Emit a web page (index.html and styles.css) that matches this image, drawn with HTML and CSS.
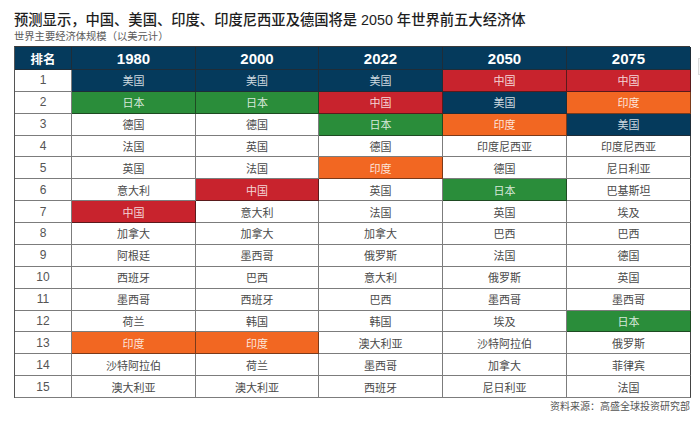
FILE: index.html
```html
<!DOCTYPE html>
<html lang="zh-CN">
<head>
<meta charset="utf-8">
<link rel="stylesheet" href="styles.css">
</head>
<body>
<div class="page">
  <h1 class="title">预测显示，中国、美国、印度、印度尼西亚及德国将是 2050 年世界前五大经济体</h1>
  <p class="subtitle">世界主要经济体规模（以美元计）</p>
  <div class="grid">
    <div class="h rank-h">排名</div><div class="h">1980</div><div class="h">2000</div><div class="h">2022</div><div class="h">2050</div><div class="h">2075</div>

    <div class="r">1</div><div class="c navy">美国</div><div class="c navy">美国</div><div class="c navy">美国</div><div class="c red">中国</div><div class="c red">中国</div>
    <div class="r">2</div><div class="c green">日本</div><div class="c green">日本</div><div class="c red">中国</div><div class="c navy">美国</div><div class="c orange">印度</div>
    <div class="r">3</div><div class="c">德国</div><div class="c">德国</div><div class="c green">日本</div><div class="c orange">印度</div><div class="c navy">美国</div>
    <div class="r">4</div><div class="c">法国</div><div class="c">英国</div><div class="c">德国</div><div class="c">印度尼西亚</div><div class="c">印度尼西亚</div>
    <div class="r">5</div><div class="c">英国</div><div class="c">法国</div><div class="c orange">印度</div><div class="c">德国</div><div class="c">尼日利亚</div>
    <div class="r">6</div><div class="c">意大利</div><div class="c red">中国</div><div class="c">英国</div><div class="c green">日本</div><div class="c">巴基斯坦</div>
    <div class="r">7</div><div class="c red">中国</div><div class="c">意大利</div><div class="c">法国</div><div class="c">英国</div><div class="c">埃及</div>
    <div class="r">8</div><div class="c">加拿大</div><div class="c">加拿大</div><div class="c">加拿大</div><div class="c">巴西</div><div class="c">巴西</div>
    <div class="r">9</div><div class="c">阿根廷</div><div class="c">墨西哥</div><div class="c">俄罗斯</div><div class="c">法国</div><div class="c">德国</div>
    <div class="r">10</div><div class="c">西班牙</div><div class="c">巴西</div><div class="c">意大利</div><div class="c">俄罗斯</div><div class="c">英国</div>
    <div class="r">11</div><div class="c">墨西哥</div><div class="c">西班牙</div><div class="c">巴西</div><div class="c">墨西哥</div><div class="c">墨西哥</div>
    <div class="r">12</div><div class="c">荷兰</div><div class="c">韩国</div><div class="c">韩国</div><div class="c">埃及</div><div class="c green">日本</div>
    <div class="r">13</div><div class="c orange">印度</div><div class="c orange">印度</div><div class="c">澳大利亚</div><div class="c">沙特阿拉伯</div><div class="c">俄罗斯</div>
    <div class="r">14</div><div class="c">沙特阿拉伯</div><div class="c">荷兰</div><div class="c">墨西哥</div><div class="c">加拿大</div><div class="c">菲律宾</div>
    <div class="r">15</div><div class="c">澳大利亚</div><div class="c">澳大利亚</div><div class="c">西班牙</div><div class="c">尼日利亚</div><div class="c">法国</div>
  </div>
  <p class="source">资料来源：高盛全球投资研究部</p>
  <div class="edge-tab"></div>
</div>
</body>
</html>
```
FILE: styles.css
```css
* { box-sizing: border-box; }
html, body { margin: 0; padding: 0; background: #fff; }
body {
  font-family: "Liberation Sans", "Noto Sans CJK SC", sans-serif;
  color: #444;
}
.page {
  position: relative;
  width: 700px;
  height: 431px;
  padding: 10px 0 0 14px;
  overflow: hidden;
}
.title {
  margin: 0;
  font-family: "Liberation Sans", "Noto Sans CJK SC", sans-serif;
  font-size: 14.3px;
  line-height: 20px;
  font-weight: 500;
  color: #1e1e1e;
}
.subtitle {
  margin: 0;
  font-family: "Noto Sans CJK SC", sans-serif;
  font-size: 10.3px;
  line-height: 12px;
  color: #5a5a5a;
}
.grid {
  margin-top: 4px;
  width: 676px;
  height: 352px;
  display: grid;
  grid-template-columns: 57px 124px 123px 124px 124px 124px;
  grid-template-rows: 23px repeat(15, 1fr);
  border-top: 1px solid #3a3a3a;
  border-left: 1px solid #555;
}
.grid > div {
  display: flex;
  align-items: center;
  justify-content: center;
  border-right: 1px solid #7c7c7c;
  border-bottom: 1px solid #7c7c7c;
}
.h {
  background: #053a5c;
  color: #fff;
  font-family: "Liberation Sans", sans-serif;
  font-weight: bold;
  font-size: 15px;
  border-color: #1f2d38 !important;
}
.rank-h {
  font-family: "Noto Sans CJK SC", sans-serif;
  font-size: 12.5px;
}
.r {
  font-family: "Liberation Sans", sans-serif;
  font-size: 12px;
  color: #555;
}
.c {
  font-family: "Noto Sans CJK SC", sans-serif;
  font-size: 11px;
  color: #4a4a4a;
}
.grid > div:nth-child(6n) { border-right-color: #444; }
.navy { background: #053a5c; color: rgba(255,255,255,0.82); border-color: #1f2d38 !important; }
.red { background: #c8232d; color: rgba(255,255,255,0.82); border-color: #5a1a1c !important; }
.green { background: #2a8d3a; color: rgba(255,255,255,0.82); border-color: #1e4a22 !important; }
.orange { background: #f26722; color: rgba(255,255,255,0.85); border-color: #7a3a1a !important; }
.source {
  margin: 1px 0 0;
  width: 676px;
  text-align: right;
  font-family: "Noto Sans CJK SC", sans-serif;
  font-size: 10px;
  line-height: 14px;
  color: #555;
}
.edge-tab {
  position: absolute;
  left: 698px;
  top: 58px;
  width: 10px;
  height: 17px;
  background: #f5f5f5;
  border: 1px solid #dcdcdc;
}
```
